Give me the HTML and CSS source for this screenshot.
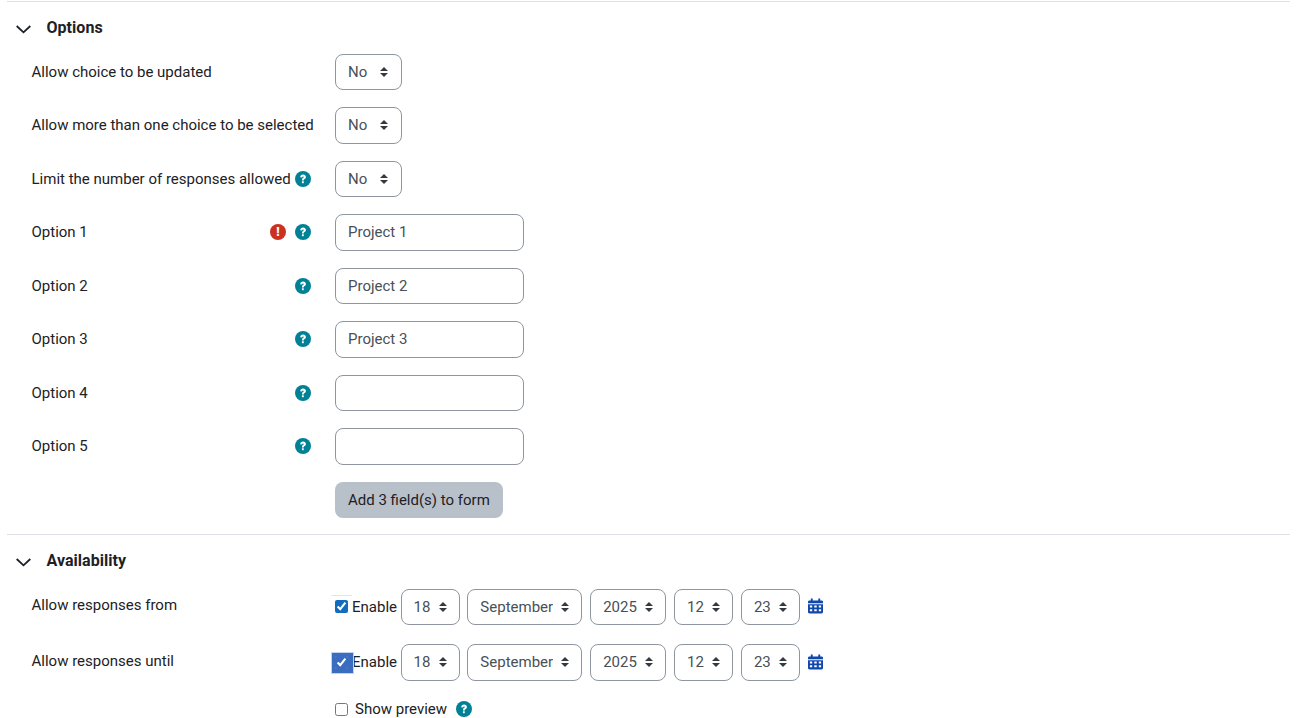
FILE: index.html
```html
<!DOCTYPE html>
<html lang="en">
<head>
<meta charset="utf-8">
<title>Choice settings</title>
<link rel="stylesheet" href="styles.css">
</head>
<body>
<svg class="defs" width="0" height="0" aria-hidden="true">
  <symbol id="q" viewBox="0 0 16 16"><circle cx="8" cy="8" r="8" fill="currentColor"/><path d="M5.200 6.200C5.300 4.600 6.500 3.600 8.100 3.600c1.600 0 2.800 1 2.800 2.400 0 1.100-.6 1.700-1.300 2.100-.6.400-.8.600-.8 1.100v.2H7V9c0-1 .4-1.600 1-2 .5-.3.800-.5.800-.9 0-.4-.3-.7-.8-.7s-.9.400-.9 1z" fill="#fff"/><rect x="6.900" y="10.200" width="1.900" height="2" rx=".4" fill="#fff"/></symbol>
  <symbol id="cal" viewBox="0 0 16 16"><path fill="currentColor" d="M3 0h2v2h6V0h2v2h1.500c.8 0 1.500.7 1.500 1.500V5H0V3.500C0 2.700.7 2 1.500 2H3zM0 6h16v8.500c0 .8-.7 1.500-1.500 1.500h-13C.7 16 0 15.300 0 14.500zm2 1.500v2h2.500v-2zm4.700 0v2h2.600v-2zm4.800 0v2H14v-2zM2 11.500v2h2.500v-2zm4.700 0v2h2.600v-2zm4.800 0v2H14v-2z" fill-rule="evenodd"/></symbol>
</svg>
<main class="form">
  <section class="section">
    <h3 class="legend"><svg class="chev" viewBox="0 0 15 9"><path d="M.7 1l6.800 6.300L14.300 1" fill="none" stroke="currentColor" stroke-width="1.800"/></svg>Options</h3>
    <div class="row"><div class="label"><span>Allow choice to be updated</span></div><select class="sel"><option>No</option></select></div>
    <div class="row"><div class="label"><span>Allow more than one choice to be selected</span></div><select class="sel"><option>No</option></select></div>
    <div class="row"><div class="label"><span>Limit the number of responses allowed</span><svg class="help"><use href="#q"/></svg></div><select class="sel"><option>No</option></select></div>
    <div class="row"><div class="label"><span>Option 1</span><span class="icons"><span class="err">!</span><svg class="help"><use href="#q"/></svg></span></div><input class="txt" type="text" value="Project 1"></div>
    <div class="row"><div class="label"><span>Option 2</span><svg class="help"><use href="#q"/></svg></div><input class="txt" type="text" value="Project 2"></div>
    <div class="row"><div class="label"><span>Option 3</span><svg class="help"><use href="#q"/></svg></div><input class="txt" type="text" value="Project 3"></div>
    <div class="row"><div class="label"><span>Option 4</span><svg class="help"><use href="#q"/></svg></div><input class="txt" type="text"></div>
    <div class="row"><div class="label"><span>Option 5</span><svg class="help"><use href="#q"/></svg></div><input class="txt" type="text"></div>
    <div class="row last"><div class="label"></div><button class="btn" type="button">Add 3 field(s) to form</button></div>
  </section>
  <section class="section">
    <h3 class="legend"><svg class="chev" viewBox="0 0 15 9"><path d="M.7 1l6.800 6.300L14.300 1" fill="none" stroke="currentColor" stroke-width="1.800"/></svg>Availability</h3>
    <div class="row date"><div class="label top"><span>Allow responses from</span></div>
      <label class="enable"><span class="ring faint"><input type="checkbox" checked></span>Enable</label>
      <select class="sel d"><option>18</option></select><select class="sel d"><option>September</option></select><select class="sel d"><option>2025</option></select><select class="sel d"><option>12</option></select><select class="sel d"><option>23</option></select>
      <svg class="cal"><use href="#cal"/></svg></div>
    <div class="row date"><div class="label top"><span>Allow responses until</span></div>
      <label class="enable"><span class="ring focus"><input type="checkbox" checked></span>Enable</label>
      <select class="sel d"><option>18</option></select><select class="sel d"><option>September</option></select><select class="sel d"><option>2025</option></select><select class="sel d"><option>12</option></select><select class="sel d"><option>23</option></select>
      <svg class="cal"><use href="#cal"/></svg></div>
    <div class="row preview"><div class="label"></div>
      <label class="show"><input type="checkbox">Show preview</label><svg class="help"><use href="#q"/></svg></div>
  </section>
</main>
</body>
</html>
```
FILE: styles.css
```css
* { box-sizing: border-box; }
html, body { margin: 0; height: 718px; overflow: hidden; background: #fff; }
body { font: 400 15px/22.5px Roboto, "Liberation Sans", sans-serif; color: #1d2125; }
.defs { position: absolute; }
.form { width: 1283px; margin-left: 7px; padding-top: 1px; }
.section { border-top: 1px solid #dee2e6; }
.section + .section { margin-top: -1px; }
.legend { display: flex; align-items: center; height: 51.5px; margin: 0; padding-left: 9px; font-size: 16px; font-weight: 700; line-height: 24px; letter-spacing: .04px; }
.section + .section .legend { height: 54px; padding-bottom: 1px; }
.chev { width: 15px; height: 9px; margin-right: 15.500px; margin-top: 3px; }
.row { display: flex; align-items: center; padding-left: 24.500px; margin-bottom: 17px; }
.row.last { margin-bottom: 16.500px; }
.label { display: flex; justify-content: space-between; align-items: center; width: 303.500px; flex: none; }
.label > .help { margin-right: 24px; }
.label .icons { display: flex; gap: 9px; align-items: center; margin-right: 24px; }
.help { display: block; flex: none; width: 16px; height: 16px; color: #008196; }
.err { display: block; width: 16px; height: 16px; border-radius: 50%; background: #ca3120; color: #fff; font-size: 12px; font-weight: 900; line-height: 16px; text-align: center; }
.sel { appearance: none; -webkit-appearance: none; height: 36.5px; padding: 0 33px 0 12px; border: 1px solid #8f959e; border-radius: 8px; font: inherit; color: #495057; background: #fff url("data:image/svg+xml,%3Csvg xmlns='http://www.w3.org/2000/svg' width='8' height='10' viewBox='0 0 8 10'%3E%3Cpath fill='%23343a40' d='M4 0l4 4H0zM4 10L0 6h8z'/%3E%3C/svg%3E") no-repeat right 13px center; }
.txt { display: block; width: 189px; height: 36.5px; padding: 0 12px; border: 1px solid #8f959e; border-radius: 8px; font: inherit; color: #495057; background: #fff; }
.btn { height: 36.5px; padding: 0 13px; border: 0; border-radius: 8px; font: inherit; color: #1d2125; background: #b8c0ca; }
.date { align-items: flex-start; margin-bottom: 19px; }
.top { margin-top: 5.600px; }
.enable { display: flex; align-items: center; height: 36.5px; margin-right: 3.500px; }
.ring { position: relative; display: flex; width: 17px; height: 19px; align-items: center; }
.ring input { width: 13px; height: 13px; margin: 0; accent-color: #0f6cbf; }
.ring.focus::before { content: ""; position: absolute; left: -4px; top: -1px; width: 21px; height: 20px; background: #3a6cc0; border: 1px solid #c3d4ef; }
.ring.focus input { position: relative; accent-color: #3a6cc0; }
.ring.faint::before { content: ""; position: absolute; left: -4px; top: -2px; width: 21px; height: 1px; background: #dbe6f6; }
.sel.d { padding-right: 28px; background-position: right 12px center; }
.sel.d + .sel.d { margin-left: 7.850px; }
.cal { width: 15px; height: 16px; margin-left: 8px; margin-top: 9.500px; color: #0f47ad; }
.preview { margin-top: -1.500px; margin-bottom: 0; }
.show { display: flex; align-items: center; margin-right: 9px; }
.show input { width: 13px; height: 13px; margin: 0 7px 0 0; }
```
